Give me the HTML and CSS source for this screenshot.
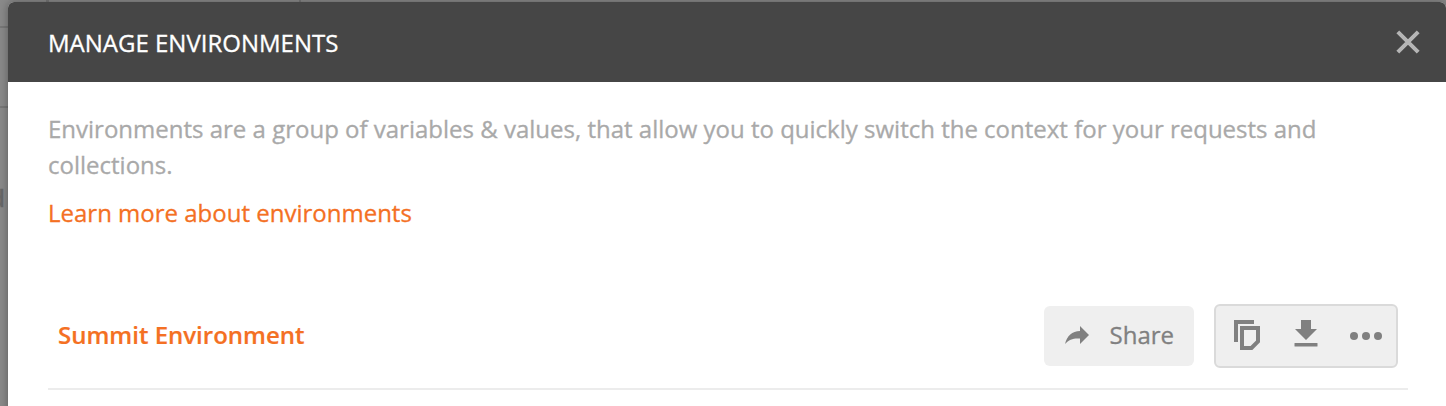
FILE: index.html
```html
<!DOCTYPE html>
<html lang="en">
<head>
<meta charset="utf-8">
<title>Manage Environments</title>
<link rel="stylesheet" href="styles.css">
</head>
<body>
<div class="backdrop">
  <span class="tab-edge"></span>
  <span class="rule rule-upper"></span>
  <span class="rule rule-lower"></span>
  <span class="behind-text">d</span>
</div>
<main class="modal">
  <header class="modal-header">
    <h1 class="title">MANAGE ENVIRONMENTS</h1>
    <svg class="close" width="24" height="24" viewBox="0 0 24 24"><path d="M1.800 1.800 22.200 22.200M22.200 1.800 1.800 22.200" stroke="#b5b5b5" stroke-width="4"/></svg>
  </header>
  <section class="modal-body">
    <p class="description">Environments are a group of variables &amp; values, that allow you to quickly switch the context for your requests and<br>collections.</p>
    <a class="learn">Learn more about environments</a>
    <div class="environment">
      <a class="name">Summit Environment</a>
      <div class="share">
        <svg class="share-icon" width="24" height="18" viewBox="0 0 24 18"><path d="M0 18C2 9.500 7 5.500 15 5V0L24 9 15 18V12.500C8.500 12 4 13.500 0 18Z" fill="#808080"/></svg>
        <span class="share-label">Share</span>
      </div>
      <div class="actions">
        <svg class="copy" width="26" height="30" viewBox="0 0 26 30" fill="none" stroke="#808080" stroke-width="4"><path d="M20 2H2V22"/><path d="M8 8H24V21.500L17.500 28H8Z"/></svg>
        <svg class="download" width="24" height="27" viewBox="0 0 24 27" fill="#808080"><path d="M7 0H17V9H23L12 20 1 9H7Z"/><rect x="0.500" y="23" width="23" height="3.500" rx=".5"/></svg>
        <svg class="more" width="32" height="8" viewBox="0 0 32 8" fill="#808080"><circle cx="4" cy="4" r="4"/><circle cx="16" cy="4" r="4"/><circle cx="28" cy="4" r="4"/></svg>
      </div>
    </div>
  </section>
</main>
</body>
</html>
```
FILE: styles.css
```css
* { box-sizing: border-box; }
body {
  margin: 0;
  height: 406px;
  overflow: hidden;
  position: relative;
  padding: 2px 0 0 8px;
  background: #8a8a8a;
  font-family: "Open Sans", "Noto Sans", sans-serif;
  font-size: 24px;
  -webkit-text-stroke: .3px currentColor;
}
.backdrop { position: absolute; inset: 0; overflow: hidden; }
.tab-edge {
  position: absolute;
  left: 46px;
  top: 0;
  width: 255px;
  height: 2px;
  background: #8b8b8b;
  border-left: 3px solid #777;
  border-right: 2px solid #777;
}
.rule { position: absolute; left: 0; width: 8px; height: 2px; background: #787878; }
.rule-upper { top: 26px; }
.rule-lower { top: 106px; }
.behind-text {
  position: absolute;
  right: 1441px;
  top: 181px;
  line-height: 33px;
  font-weight: 600;
  color: #686868;
}
.modal {
  position: relative;
  height: 420px;
  background: #fff;
  border-radius: 6px 6px 0 0;
  box-shadow: 0 0 10px rgba(0, 0, 0, .35);
  overflow: hidden;
}
.modal-header {
  height: 80px;
  padding: 0 26px 0 40px;
  display: flex;
  align-items: center;
  justify-content: space-between;
  background: #464646;
}
.title {
  margin: 0;
  color: #fff;
  font-size: 24px;
  font-weight: 400;
}
.modal-body { padding: 29px 38px 0 40px; }
.description { margin: 0; color: #a9a9a9; line-height: 36px; white-space: nowrap; }
.learn { display: block; margin-top: 12px; line-height: 36px; color: #f47023; }
.environment {
  height: 86px;
  margin-top: 73px;
  padding: 2px 10px 22px;
  display: flex;
  align-items: center;
  border-bottom: 2px solid #ececec;
}
.name { margin-right: auto; padding-bottom: 4px; color: #f47023; font-weight: 600; -webkit-text-stroke: .2px currentColor; }
.share {
  width: 150px;
  height: 60px;
  padding: 0 20px 0 21px;
  display: flex;
  align-items: center;
  justify-content: space-between;
  background: #efefef;
  border-radius: 6px;
  color: #808080;
}
.share-icon { margin-bottom: 2px; }
.share-label { padding-bottom: 4px; }
.actions {
  width: 184px;
  height: 64px;
  flex: none;
  margin-left: 20px;
  padding: 0 14px 0 18px;
  display: flex;
  align-items: center;
  justify-content: space-between;
  background: #efefef;
  border: 2px solid #dadada;
  border-radius: 6px;
}
.copy { margin-bottom: 2px; }
.download { margin: 0 -1px 5px 1px; }
```
